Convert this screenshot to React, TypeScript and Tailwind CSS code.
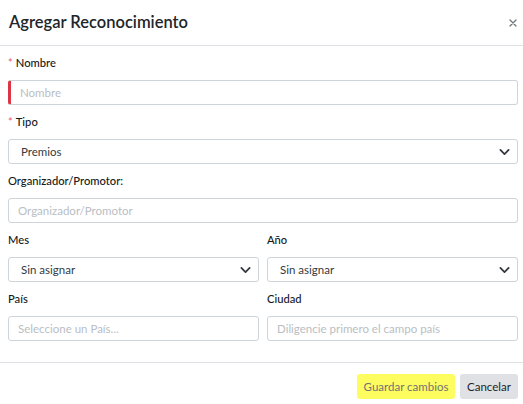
const font = { fontFamily: 'Lato, "Noto Sans", sans-serif' };

const Chevron = () => (
  <svg viewBox="0 0 16 16" className="pointer-events-none absolute right-[7px] top-1/2 h-[11px] w-[11px] -translate-y-1/2">
    <path d="m2 5 6 6 6-6" fill="none" stroke="#343a40" strokeWidth="2.6" strokeLinecap="round" strokeLinejoin="round" />
  </svg>
);

const Label = ({ text, required }: { text: string; required?: boolean }) => (
  <div className="mb-2 flex h-[18px] items-center text-[11.2px] font-medium text-[#16191c]">
    {required && <span className="mr-[3px] text-[#ee5f6b]">*</span>}
    {text}
  </div>
);

const Input = ({ placeholder, invalid }: { placeholder: string; invalid?: boolean }) => (
  <input
    placeholder={placeholder}
    className={
      'block h-[25px] w-full rounded-[3px] border border-[#ced4da] bg-white pl-[9px] pr-3 text-[11.5px] text-[#495057] outline-none placeholder:text-[#b9bec4] ' +
      (invalid ? 'border-l-[3px] border-l-[#dc3545] pl-[9px]' : '')
    }
  />
);

const Select = ({ value }: { value: string }) => (
  <div className="relative h-[25px] w-full rounded-[3px] border border-[#ced4da] bg-white">
    <div className="flex h-full items-center px-3 text-[11.5px] text-[#343a40]">{value}</div>
    <Chevron />
  </div>
);

export default function App() {
  return (
    <div className="h-[404px] w-[523px] overflow-hidden bg-white" style={font}>
      {/* Encabezado */}
      <div className="flex h-[46px] items-center justify-between border-b border-[#dee2e6] pl-[9px] pr-[6px]">
        <h2 className="text-[16.5px] font-semibold text-[#212529]">Agregar Reconocimiento</h2>
        <svg viewBox="0 0 16 16" className="h-[8px] w-[8px]">
          <path d="M2 2l12 12M14 2L2 14" stroke="#6c757d" strokeWidth="2.5" strokeLinecap="round" />
        </svg>
      </div>

      {/* Formulario */}
      <div className="flex flex-col gap-2 pb-[21px] pl-2 pr-[5px] pt-2">
        <div>
          <Label text="Nombre" required />
          <Input placeholder="Nombre" invalid />
        </div>
        <div>
          <Label text="Tipo" required />
          <Select value="Premios" />
        </div>
        <div>
          <Label text="Organizador/Promotor:" />
          <Input placeholder="Organizador/Promotor" />
        </div>
        <div className="grid grid-cols-2 gap-x-2 gap-y-2">
          <div>
            <Label text="Mes" />
            <Select value="Sin asignar" />
          </div>
          <div>
            <Label text="Año" />
            <Select value="Sin asignar" />
          </div>
          <div>
            <Label text="País" />
            <Input placeholder="Seleccione un País..." />
          </div>
          <div>
            <Label text="Ciudad" />
            <Input placeholder="Diligencie primero el campo país" />
          </div>
        </div>
      </div>

      {/* Pie */}
      <div className="flex justify-end gap-[5px] border-t border-[#dee2e6] pr-[5px] pt-[11px]">
        <button className="h-[25px] w-[98px] rounded-[3px] bg-[#fdfd5f] text-[11.5px] text-[#737373]">
          Guardar cambios
        </button>
        <button className="h-[25px] w-[58px] rounded-[3px] bg-[#e0e1e4] text-[11.5px] text-[#212529]">
          Cancelar
        </button>
      </div>
    </div>
  );
}
